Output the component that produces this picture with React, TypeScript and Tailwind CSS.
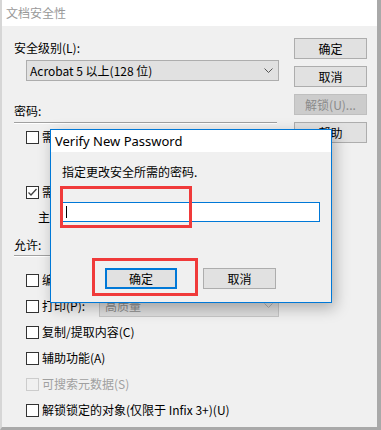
import React from 'react'

var cjk = { fontFamily: '"Noto Sans CJK SC", "Noto Sans", sans-serif' }
var latin = { fontFamily: '"Noto Sans", "Noto Sans CJK SC", sans-serif' }

function Chevron(props: { color: string }) {
  return (
    <svg width="9" height="6" viewBox="0 0 9 6">
      <polyline points="0.5,0.5 4.5,4.5 8.5,0.5" fill="none" stroke={props.color} strokeWidth="1" />
    </svg>
  )
}

function Box(props: { checked?: boolean; disabled?: boolean }) {
  return (
    <div className={'w-[13px] h-[13px] shrink-0 border flex items-center justify-center ' +
      (props.disabled ? 'border-[#cccccc] bg-[#f0f0f0]' : 'border-[#333333] bg-white')}>
      {props.checked && (
        <svg width="11" height="11" viewBox="0 0 11 11">
          <polyline points="1.5,5.5 4,8 9.5,2" fill="none" stroke="#444" strokeWidth="1.3" />
        </svg>
      )}
    </div>
  )
}

function Check(props: { label: string; checked?: boolean; disabled?: boolean; h?: string; children?: any }) {
  return (
    <div className={'flex items-center ml-[12px] ' + (props.h || 'h-[16px]')}>
      <Box checked={props.checked} disabled={props.disabled} />
      <span className={'ml-[3px] whitespace-nowrap ' + (props.disabled ? 'text-[#a0a0a0]' : 'text-black')}>{props.label}</span>
      {props.children}
    </div>
  )
}

function Btn(props: { label: string; disabled?: boolean }) {
  return (
    <div className={'w-[73px] h-[21px] border border-[#adadad] flex items-center justify-center ' +
      (props.disabled ? 'bg-[#cccccc] text-[#8a8a8a] border-[#bfbfbf]' : 'bg-[#e1e1e1] text-black')}>
      {props.label}
    </div>
  )
}

export default function App() {
  return (
    <div className="relative w-[381px] h-[430px] overflow-hidden bg-[#f0f0f0] border-l-[2px] border-l-[#d6d6d6] border-r-[4px] border-r-[#a9a9a9] border-b-[3px] border-b-[#a9a9a9] text-[12px] leading-[16px]" style={cjk}>
      <div className="h-[26px] bg-white pl-[4px] flex items-center text-[#999999]">文档安全性</div>

      <div className="flex pl-[12px] pt-[14px]">
        <div className="w-[265px] flex flex-col">
          <div className="h-[16px]">安全级别(L):</div>
          <div className="mt-[4px] ml-[12px] w-[253px] h-[21px] bg-[#e1e1e1] border border-[#adadad] flex items-center justify-between pl-[3px] pr-[5px]">
            <span>Acrobat 5 以上(128 位)</span>
            <Chevron color="#555" />
          </div>
          <div className="mt-[22px] h-[16px]">密码:</div>
          <div className="mt-[3px] w-[263px] h-[2px] border-t border-t-[#a0a0a0] border-b border-b-white" />
          <div className="mt-[5px]">
            <Check label="需要密码才能打开文档(O)" />
          </div>
          <div className="mt-[39px]">
            <Check label="需要密码才能更改安全设置(E)" checked />
          </div>
          <div className="mt-[9px] ml-[24px] h-[16px] whitespace-nowrap">主口令(M):</div>
          <div className="mt-[12px] h-[16px]">允许:</div>
          <div className="mt-[2px] w-[263px] h-[2px] border-t border-t-[#a0a0a0] border-b border-b-white" />
          <div className="mt-[10px] flex flex-col">
            <Check label="编辑文档(E)" h="h-[26px]" />
            <Check label="打印(P):" h="h-[26px]">
              <div className="ml-auto w-[180px] h-[21px] bg-[#dedede] border border-[#c6c6c6] flex items-center justify-between pl-[5px] pr-[5px] text-[#8d8d8d]">
                <span>高质量</span>
                <Chevron color="#b0b0b0" />
              </div>
            </Check>
            <Check label="复制/提取内容(C)" h="h-[26px]" />
            <Check label="辅助功能(A)" h="h-[26px]" />
            <Check label="可搜索元数据(S)" disabled h="h-[26px]" />
            <Check label="解锁锁定的对象(仅限于 Infix 3+)(U)" h="h-[26px]" />
          </div>
        </div>

        <div className="ml-[15px] mt-[-2px] flex flex-col gap-[7px]">
          <Btn label="确定" />
          <Btn label="取消" />
          <Btn label="解锁(U)..." disabled />
          <Btn label="帮助" />
        </div>
      </div>

      <div className="absolute left-[48px] top-[129px] w-[282px] h-[174px] border border-[#0078d7] bg-[#f0f0f0] shadow-[3px_5px_14px_rgba(0,0,0,0.28)] flex flex-col">
        <div className="h-[22px] bg-white pl-[4px] flex items-center text-[13px] text-black" style={latin}>Verify New Password</div>
        <div className="pl-[11px] pt-[12px] flex flex-col">
          <div className="h-[16px]">指定更改安全所需的密码.</div>
          <div className="mt-[22px] w-[258px] h-[20px] bg-white border border-[#0078d7] flex items-center pl-[3px]">
            <div className="w-px h-[12px] bg-black" />
          </div>
          <div className="mt-[46px] ml-[43px] flex gap-[26px]">
            <div className="w-[72px] h-[21px] border-2 border-[#0078d7] bg-[#e1e1e1] flex items-center justify-center">确定</div>
            <div className="w-[73px] h-[21px] border border-[#adadad] bg-[#e1e1e1] flex items-center justify-center">取消</div>
          </div>
        </div>
      </div>

      <div className="absolute left-[58px] top-[186px] w-[132px] h-[42px] border-[3px] border-[#f03a3a]" />
      <div className="absolute left-[90px] top-[258px] w-[106px] h-[38px] border-[3px] border-[#f03a3a]" />
    </div>
  )
}
